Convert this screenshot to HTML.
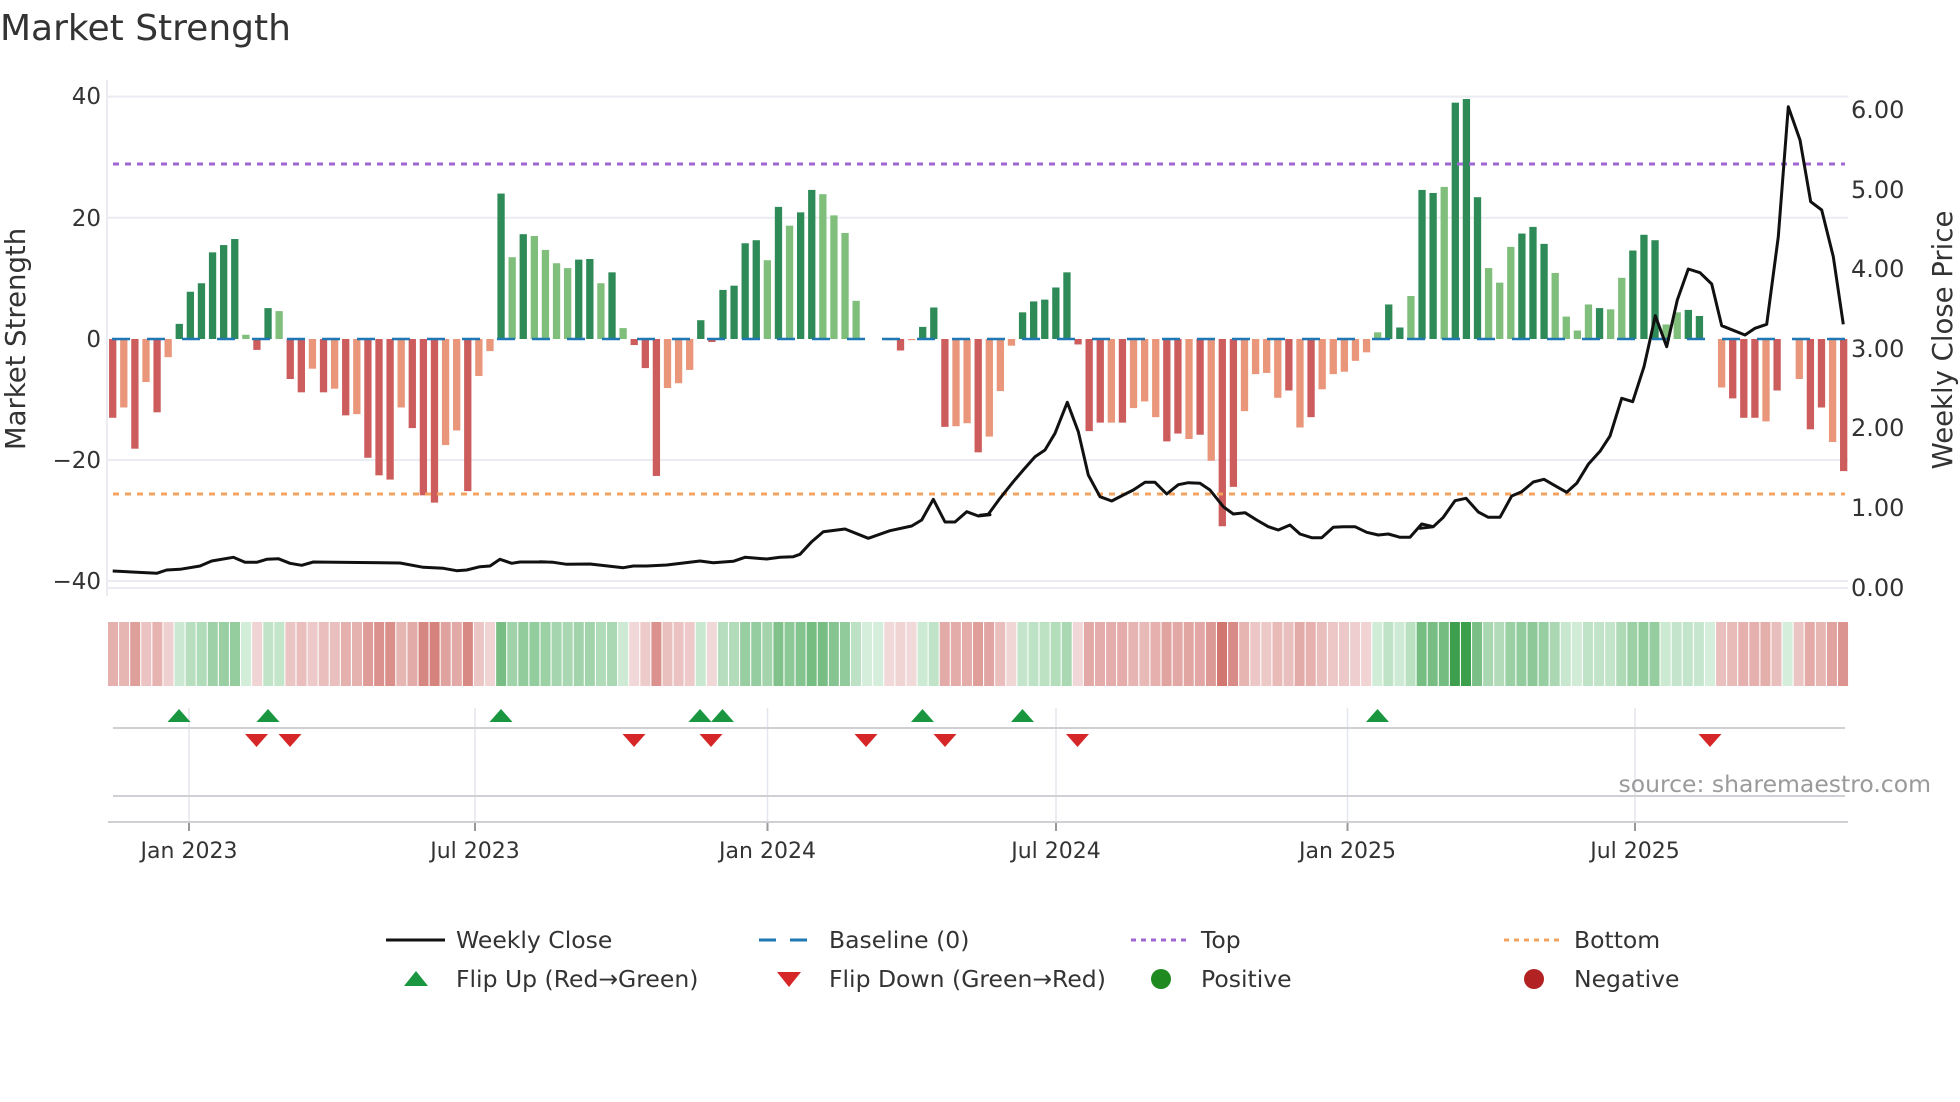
<!DOCTYPE html>
<html><head><meta charset="utf-8"><style>
html,body{margin:0;padding:0;background:#fff;width:1960px;height:1102px;overflow:hidden}
svg{display:block}
text{font-family:"DejaVu Sans","Liberation Sans",sans-serif;fill:#333}
</style></head><body>
<svg id="s" xmlns="http://www.w3.org/2000/svg" width="1960" height="1102" viewBox="0 0 1960 1102">
<text x="0" y="40" font-size="36" fill="#2a2a2a">Market Strength</text>
<g stroke="#ebebf2" stroke-width="2">
<line x1="107" y1="96.6" x2="1848" y2="96.6"/>
<line x1="107" y1="217.8" x2="1848" y2="217.8"/>
<line x1="107" y1="460" x2="1848" y2="460"/>
<line x1="107" y1="581" x2="1848" y2="581"/>
<line x1="107" y1="588" x2="1848" y2="588"/>
<line x1="107" y1="80" x2="107" y2="596"/>
</g>
<g font-size="23" text-anchor="end">
<text x="101" y="104">40</text><text x="101" y="226">20</text><text x="101" y="347">0</text>
<text x="101" y="468">−20</text><text x="101" y="589">−40</text>
</g>
<g font-size="24">
<text x="1851" y="118">6.00</text><text x="1851" y="198">5.00</text><text x="1851" y="277">4.00</text>
<text x="1851" y="357">3.00</text><text x="1851" y="436">2.00</text><text x="1851" y="516">1.00</text><text x="1851" y="596">0.00</text>
</g>
<text font-size="27.5" text-anchor="middle" transform="translate(25,339) rotate(-90)">Market Strength</text>
<text font-size="27.5" text-anchor="middle" transform="translate(1952,340) rotate(-90)">Weekly Close Price</text>
<g id="bars"></g>
<line x1="113" y1="164" x2="1845" y2="164" stroke="#a066d3" stroke-width="3" stroke-dasharray="6,6"/>
<line x1="113" y1="494" x2="1845" y2="494" stroke="#f4a460" stroke-width="3" stroke-dasharray="6,6"/>
<line x1="112" y1="339" x2="1845" y2="339" stroke="#1f77b4" stroke-width="2.5" stroke-dasharray="18,17"/>
<polyline id="price" fill="none" stroke="#111" stroke-width="3" stroke-linejoin="round"/>
<g id="strip"></g>
<g stroke="#e4e6ee" stroke-width="1.5">
<line x1="189" y1="708" x2="189" y2="822"/><line x1="475" y1="708" x2="475" y2="822"/>
<line x1="767.5" y1="708" x2="767.5" y2="822"/><line x1="1056" y1="708" x2="1056" y2="822"/>
<line x1="1347.5" y1="708" x2="1347.5" y2="822"/><line x1="1635" y1="708" x2="1635" y2="822"/>
</g>
<line x1="113" y1="728" x2="1845" y2="728" stroke="#cfcfd4" stroke-width="2"/>
<line x1="113" y1="796" x2="1845" y2="796" stroke="#cfcfd4" stroke-width="2"/>
<line x1="108" y1="822" x2="1848" y2="822" stroke="#cfcfd4" stroke-width="2"/>
<g stroke="#999" stroke-width="2">
<line x1="189" y1="823" x2="189" y2="831"/><line x1="475" y1="823" x2="475" y2="831"/>
<line x1="767.5" y1="823" x2="767.5" y2="831"/><line x1="1056" y1="823" x2="1056" y2="831"/>
<line x1="1347.5" y1="823" x2="1347.5" y2="831"/><line x1="1635" y1="823" x2="1635" y2="831"/>
</g>
<g id="marks"></g>
<g font-size="22" text-anchor="middle">
<text x="189" y="858">Jan 2023</text><text x="475" y="858">Jul 2023</text>
<text x="767.5" y="858">Jan 2024</text><text x="1056" y="858">Jul 2024</text>
<text x="1347.5" y="858">Jan 2025</text><text x="1635" y="858">Jul 2025</text>
</g>
<text x="1931" y="792" font-size="23.5" text-anchor="end" style="fill:#9a9a9a">source: sharemaestro.com</text>
<g font-size="23.5">
<line x1="386" y1="940" x2="445" y2="940" stroke="#111" stroke-width="3"/>
<text x="456" y="948">Weekly Close</text>
<line x1="759" y1="940" x2="815" y2="940" stroke="#1f77b4" stroke-width="3" stroke-dasharray="17,14"/>
<text x="829" y="948">Baseline (0)</text>
<line x1="1131" y1="940" x2="1186" y2="940" stroke="#a066d3" stroke-width="3" stroke-dasharray="5,5"/>
<text x="1201" y="948">Top</text>
<line x1="1504" y1="940" x2="1560" y2="940" stroke="#f4a460" stroke-width="3" stroke-dasharray="5,5"/>
<text x="1574" y="948">Bottom</text>
<polygon points="404,986 428,986 416,971" fill="#1a9641"/>
<text x="456" y="987">Flip Up (Red→Green)</text>
<polygon points="777,972 801,972 789,987" fill="#d62728"/>
<text x="829" y="987">Flip Down (Green→Red)</text>
<circle cx="1161" cy="979" r="10" fill="#1f8a1f"/>
<text x="1201" y="987">Positive</text>
<circle cx="1534" cy="979" r="10" fill="#b22222"/>
<text x="1574" y="987">Negative</text>
</g>
</svg>
<script>
var NS="http://www.w3.org/2000/svg";
var V=[-13,-11.3,-18.1,-7.1,-12.1,-3,2.5,7.8,9.2,14.3,15.5,16.5,0.7,-1.8,5.1,4.6,-6.6,-8.8,-4.9,-8.8,-8.2,-12.6,-12.4,-19.6,-22.5,-23.2,-11.3,-14.7,-25.8,-27,-17.5,-15.1,-25.1,-6.1,-2,24,13.5,17.3,17,14.7,12.5,11.7,13.1,13.2,9.2,11,1.8,-1,-4.8,-22.6,-8.1,-7.3,-5.1,3.1,-0.5,8.1,8.8,15.8,16.3,13,21.8,18.7,20.9,24.6,23.9,20.4,17.5,6.3,0,0,-0.2,-1.9,-0.2,2,5.2,-14.5,-14.4,-13.9,-18.7,-16.1,-8.6,-1.1,4.4,6.2,6.5,8.5,11,-0.9,-15.2,-13.8,-13.8,-13.8,-11.4,-10.3,-12.9,-16.9,-15.6,-16.5,-15.8,-20.1,-30.9,-24.4,-11.9,-5.8,-5.6,-9.7,-8.5,-14.6,-12.9,-8.3,-5.8,-5.4,-3.6,-2.2,1.1,5.7,1.9,7.1,24.6,24.1,25.1,39,39.6,23.4,11.7,9.3,15.2,17.4,18.5,15.7,10.9,3.7,1.4,5.7,5.1,4.9,10.1,14.6,17.2,16.3,2.4,4.4,4.8,3.8,0,-8,-9.8,-13,-13,-13.6,-8.5,0,-6.6,-14.9,-11.3,-17,-21.8];
var D="DLDLDLDDDDDDLDDLDDLDLDLDDDLDDDLLDLLDLDLLLLDDLDLDDDLLLDDDDDDLDLDDLLLLLLLDLDDDLLDLLLDDDDDDDDLDLLLDDLDLDDLLLLDLDLLLLLLDDLDDLDDDLLLDDDLLLLDLLDDDLLDDLLDDDLDLLDDLDD";
var bars=document.getElementById('bars'),strip=document.getElementById('strip');
function mix(a,b,t){return 'rgb('+a.map(function(v,i){return Math.round(v+(b[i]-v)*t)}).join(',')+')';}
for(var i=0;i<V.length;i++){
 var v=V[i],cx=112.7+i*11.096,d=D[i]==='D';
 if(Math.abs(v)>0.05){
  var r=document.createElementNS(NS,'rect');var h=Math.abs(v)*6.06;
  r.setAttribute('x',cx-3.65);r.setAttribute('width',7.3);
  r.setAttribute('y',v>0?339-h:339);r.setAttribute('height',h);
  r.setAttribute('fill',v>0?(d?'#2e8b57':'#7fbf7b'):(d?'#cd5c5c':'#e9967a'));
  bars.appendChild(r);
 }
 var s=document.createElementNS(NS,'rect');
 s.setAttribute('x',108+i*11.09);s.setAttribute('width',10);s.setAttribute('y',622);s.setAttribute('height',64);
 var c;
 if(v>=0){c=mix([213,238,219],[58,158,74],Math.min(v/40,1));}
 else{c=mix([242,218,218],[210,118,112],Math.min(-v/31,1));}
 s.setAttribute('fill',c);strip.appendChild(s);
}
var segs=[[100,[38,1473,170,1480,200,1470,240,1468,300,1458,335,1443,400,1432,435,1447,470,1447,500,1438,535,1436,570,1450,605,1456,640,1446,900,1449,970,1462,1030,1465,1070,1472,1100,1470,1140,1460,1170,1458,1200,1438,1235,1450,1260,1446,1340,1446]],
[540,[0,1445,40,1447,80,1453,150,1452,250,1463,280,1458,320,1458,380,1455,480,1443,520,1448,580,1444,615,1432,680,1437,720,1432,760,1430,780,1423,815,1385,850,1355,915,1347,985,1375,1050,1352,1115,1338,1145,1320,1180,1258,1215,1326,1245,1326,1280,1295,1315,1308,1350,1304]],
[980,[0,1306,25,1303,60,1255,100,1205,130,1170,165,1130,195,1110,225,1060,262,967,295,1055,325,1185,360,1250,395,1263,430,1245,460,1230,495,1207,525,1207,560,1242,595,1214,625,1208,660,1210,690,1230,730,1280,760,1302,795,1298,830,1320,865,1340,895,1350,930,1335,960,1362,995,1373,1025,1373,1060,1342,1090,1340,1125,1340,1160,1357,1195,1365,1225,1362,1260,1372,1290,1372,1325,1332,1360,1340]],
[1420,[0,1345,40,1340,70,1312,105,1262,138,1255,175,1296,205,1312,240,1312,275,1248,305,1235,340,1206,372,1198,405,1217,440,1237,470,1210,505,1153,540,1114,570,1068,605,955,638,965,672,860,690,780,706,707,740,800,772,660,805,567,840,578,875,612,905,737,975,765,1005,745,1040,733,1075,470,1105,80,1140,180,1172,365,1205,390,1240,530,1270,733]]];
var pts=[];
segs.forEach(function(sg){var o=sg[0],a=sg[1];for(var k=0;k<a.length;k+=2){pts.push((o+a[k]/3).toFixed(1)+','+(80+a[k+1]/3).toFixed(1));}});
document.getElementById('price').setAttribute('points',pts.join(' '));
var marks=document.getElementById('marks');
[179,268,501,700,722.5,922.5,1022.5,1377.5].forEach(function(x){var p=document.createElementNS(NS,'polygon');p.setAttribute('points',(x-11.5)+',722 '+(x+11.5)+',722 '+x+',709');p.setAttribute('fill','#1a9641');marks.appendChild(p);});
[256.5,290,634,711,866,945,1077.5,1710].forEach(function(x){var p=document.createElementNS(NS,'polygon');p.setAttribute('points',(x-11.5)+',734 '+(x+11.5)+',734 '+x+',747');p.setAttribute('fill','#d62728');marks.appendChild(p);});
</script>
</body></html>
